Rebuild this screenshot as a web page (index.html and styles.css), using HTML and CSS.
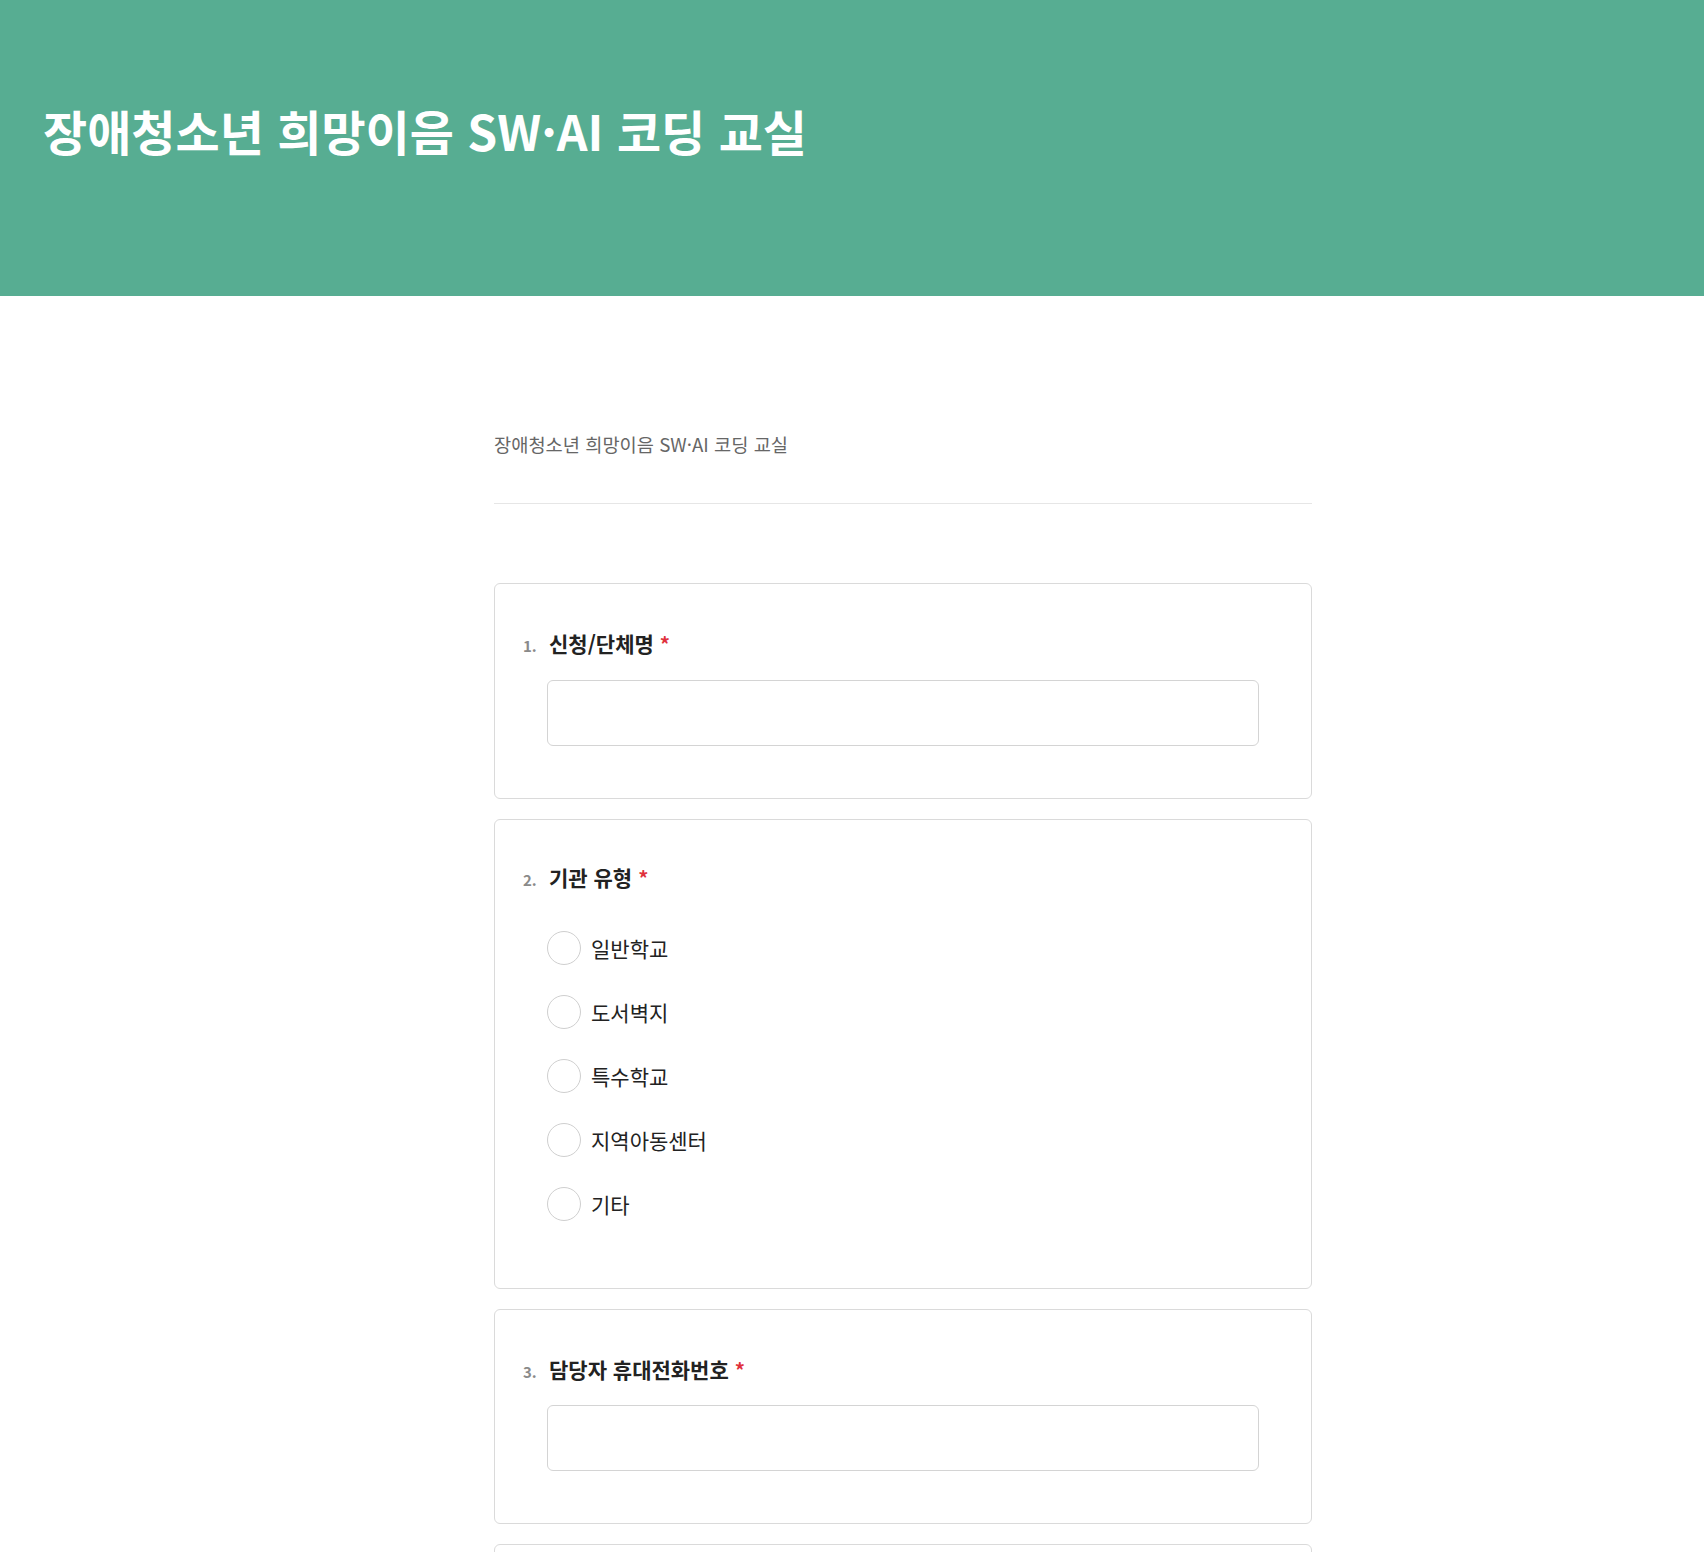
FILE: index.html
```html
<!DOCTYPE html>
<html lang="ko">
<head>
<meta charset="utf-8">
<title>장애청소년 희망이음 SW·AI 코딩 교실</title>
<link rel="stylesheet" href="styles.css">
</head>
<body>
<header class="hero">
  <h1 class="hero-title">장애청소년 희망이음 SW·AI 코딩 교실</h1>
</header>
<main class="form-wrap">
  <div class="intro">
    <p class="intro-text">장애청소년 희망이음 SW·AI 코딩 교실</p>
  </div>
  <section class="card">
    <div class="q-head"><span class="q-num">1.</span><span class="q-label">신청/단체명</span><span class="req">*</span></div>
    <div class="q-body"><div class="text-input"></div></div>
  </section>
  <section class="card card-choice">
    <div class="q-head"><span class="q-num">2.</span><span class="q-label">기관 유형</span><span class="req">*</span></div>
    <div class="q-body">
      <ul class="options">
        <li class="option"><span class="radio"></span><span class="opt-text">일반학교</span></li>
        <li class="option"><span class="radio"></span><span class="opt-text">도서벽지</span></li>
        <li class="option"><span class="radio"></span><span class="opt-text">특수학교</span></li>
        <li class="option"><span class="radio"></span><span class="opt-text">지역아동센터</span></li>
        <li class="option"><span class="radio"></span><span class="opt-text">기타</span></li>
      </ul>
    </div>
  </section>
  <section class="card">
    <div class="q-head"><span class="q-num">3.</span><span class="q-label">담당자 휴대전화번호</span><span class="req">*</span></div>
    <div class="q-body q-body-tight"><div class="text-input"></div></div>
  </section>
  <section class="card card-empty"></section>
</main>
</body>
</html>
```
FILE: styles.css
```css
* { box-sizing: border-box; }
html, body { margin: 0; padding: 0; background: #ffffff; }
body {
  font-family: "Noto Sans CJK KR", "Noto Sans", sans-serif;
  color: #222222;
}
.hero {
  background: #57ad92;
  height: 296px;
  padding: 97px 0 0 43px;
}
.hero-title {
  margin: 0;
  color: #ffffff;
  font-size: 48px;
  font-weight: 700;
  line-height: 66px;
}
.form-wrap {
  width: 818px;
  margin: 0 0 0 494px;
  padding-bottom: 80px;
}
.intro {
  padding-top: 135px;
  padding-bottom: 46px;
  border-bottom: 1px solid #e6e6e6;
  margin-bottom: 79px;
}
.intro-text {
  margin: 0;
  font-size: 18.7px;
  line-height: 26px;
  color: #666666;
}
.card {
  border: 1px solid #dadada;
  border-radius: 6px;
  padding: 45px 52px 52px 28px;
  margin-bottom: 20px;
}
.card-choice {
  padding-top: 43px;
  padding-bottom: 52px;
}
.card-empty {
  height: 200px;
}
.q-head {
  display: flex;
  align-items: baseline;
  line-height: 28px;
}
.q-num {
  width: 26px;
  font-size: 15px;
  font-weight: 700;
  color: #8a8a8a;
}
.q-label {
  font-size: 21px;
  font-weight: 700;
  color: #222222;
}
.req {
  margin-left: 6px;
  font-size: 20px;
  font-weight: 700;
  color: #e0313c;
}
.q-body {
  margin-left: 24px;
  margin-top: 20px;
}
.q-body-tight {
  margin-top: 19px;
}
.text-input {
  height: 66px;
  border: 1px solid #d4d4d4;
  border-radius: 6px;
  background: #ffffff;
}
.options {
  list-style: none;
  margin: 22px 0 0;
  padding: 0;
}
.option {
  display: flex;
  align-items: center;
  height: 64px;
}
.radio {
  width: 34px;
  height: 34px;
  border: 1px solid #cfcfcf;
  border-radius: 50%;
  flex: none;
}
.opt-text {
  margin-left: 10px;
  font-size: 21px;
  color: #222222;
}
```
